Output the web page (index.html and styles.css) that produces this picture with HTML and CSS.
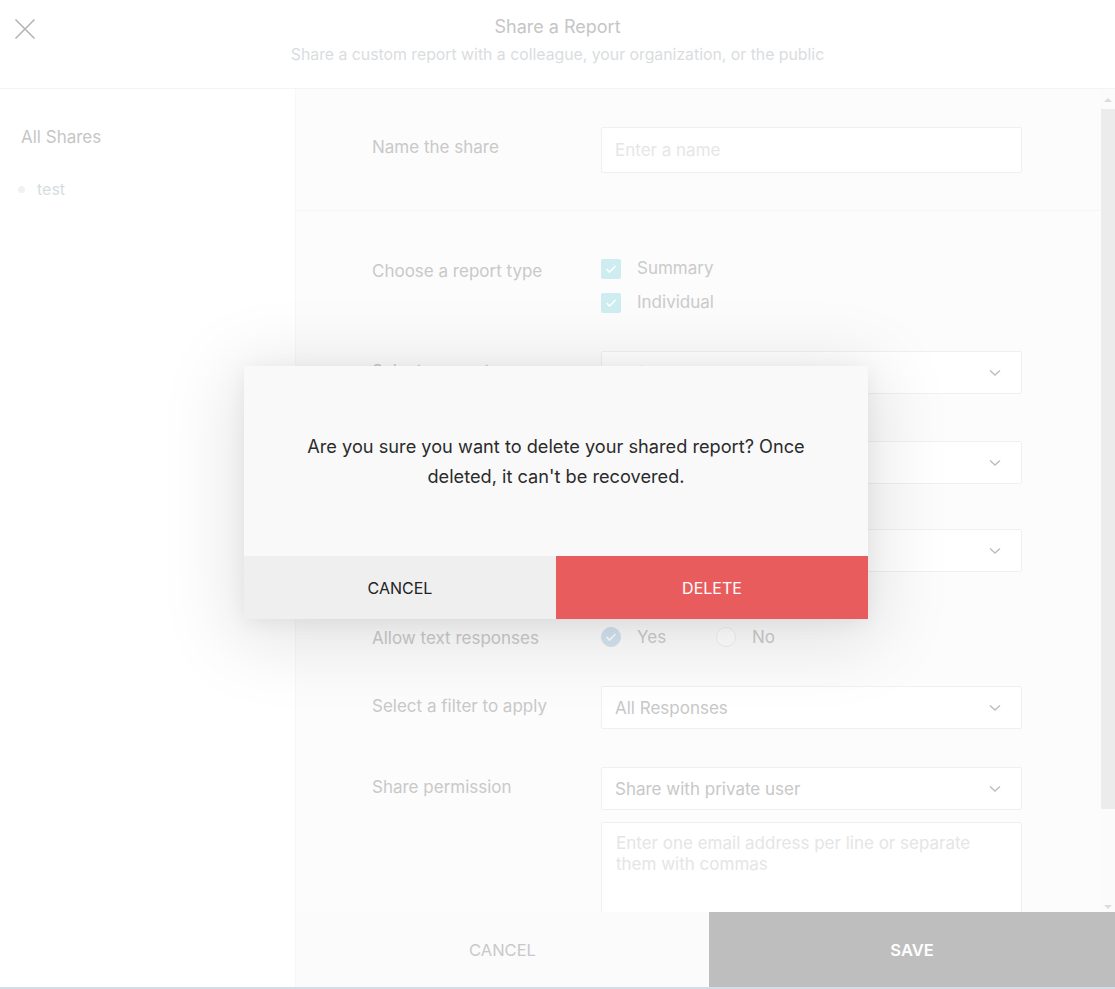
FILE: index.html
```html
<!DOCTYPE html>
<html lang="en">
<head>
<meta charset="utf-8">
<title>Share a Report</title>
<link rel="stylesheet" href="styles.css">
</head>
<body>
<div class="page">
  <header class="header">
    <button class="close" aria-label="Close">
      <svg width="22" height="22" viewBox="0 0 22 22"><path d="M1.5 1.5 L20.5 20.5 M20.5 1.5 L1.5 20.5" stroke="#b4b4b4" stroke-width="1.6" fill="none"/></svg>
    </button>
    <h1 class="title">Share a Report</h1>
    <p class="subtitle">Share a custom report with a colleague, your organization, or the public</p>
  </header>

  <div class="main">
    <aside class="sidebar">
      <div class="side-title">All Shares</div>
      <div class="side-item"><span class="dot"></span>test</div>
    </aside>

    <section class="content">
      <div class="scroll-area">
        <div class="form">
          <div class="row row-name">
            <div class="label">Name the share</div>
            <div class="input placeholder">Enter a name</div>
          </div>
          <div class="row row-type">
            <div class="label label-type">Choose a report type</div>
            <div class="checks">
              <div class="check-item"><span class="checkbox"><svg width="12" height="10" viewBox="0 0 12 10"><path d="M1.5 5 L4.5 8 L10.5 2" stroke="#fff" stroke-width="1.6" fill="none"/></svg></span>Summary</div>
              <div class="check-item"><span class="checkbox"><svg width="12" height="10" viewBox="0 0 12 10"><path d="M1.5 5 L4.5 8 L10.5 2" stroke="#fff" stroke-width="1.6" fill="none"/></svg></span>Individual</div>
            </div>
          </div>
          <div class="row row-s1">
            <div class="label">Select a report</div>
            <div class="select"><span>Default Report</span><svg class="chev" width="12" height="8" viewBox="0 0 12 8"><path d="M1 1.5 L6 6 L11 1.5" stroke="#bdbdbd" stroke-width="1.4" fill="none"/></svg></div>
          </div>
          <div class="row row-s2">
            <div class="label"></div>
            <div class="select"><span></span><svg class="chev" width="12" height="8" viewBox="0 0 12 8"><path d="M1 1.5 L6 6 L11 1.5" stroke="#bdbdbd" stroke-width="1.4" fill="none"/></svg></div>
          </div>
          <div class="row row-s3">
            <div class="label"></div>
            <div class="select"><span></span><svg class="chev" width="12" height="8" viewBox="0 0 12 8"><path d="M1 1.5 L6 6 L11 1.5" stroke="#bdbdbd" stroke-width="1.4" fill="none"/></svg></div>
          </div>
          <div class="row row-radio">
            <div class="label">Allow text responses</div>
            <div class="radios">
              <div class="radio-item"><span class="radio on"><svg width="12" height="10" viewBox="0 0 12 10"><path d="M1.5 5 L4.5 8 L10.5 2" stroke="#fff" stroke-width="1.6" fill="none"/></svg></span>Yes</div>
              <div class="radio-item"><span class="radio"></span>No</div>
            </div>
          </div>
          <div class="row row-filter">
            <div class="label">Select a filter to apply</div>
            <div class="select"><span>All Responses</span><svg class="chev" width="12" height="8" viewBox="0 0 12 8"><path d="M1 1.5 L6 6 L11 1.5" stroke="#bdbdbd" stroke-width="1.4" fill="none"/></svg></div>
          </div>
          <div class="row row-perm">
            <div class="label">Share permission</div>
            <div class="perm-controls">
              <div class="select"><span>Share with private user</span><svg class="chev" width="12" height="8" viewBox="0 0 12 8"><path d="M1 1.5 L6 6 L11 1.5" stroke="#bdbdbd" stroke-width="1.4" fill="none"/></svg></div>
              <div class="textarea">Enter one email address per line or separate them with commas</div>
            </div>
          </div>
        </div>
        <div class="scrollbar">
          <span class="arrow up"></span>
          <span class="thumb"></span>
          <span class="arrow down"></span>
        </div>
      </div>
      <footer class="footer">
        <button class="btn-cancel">CANCEL</button>
        <button class="btn-save">SAVE</button>
      </footer>
    </section>
  </div>
  <div class="bottom-line"></div>

  <div class="modal" role="dialog">
    <div class="modal-body">
      <p>Are you sure you want to delete your shared report? Once deleted, it can't be recovered.</p>
    </div>
    <div class="modal-actions">
      <button class="m-cancel">CANCEL</button>
      <button class="m-delete">DELETE</button>
    </div>
  </div>
</div>
</body>
</html>
```

FILE: styles.css
```css
* { box-sizing: border-box; }
html, body { margin: 0; padding: 0; }
body {
  font-family: "Inter", "Liberation Sans", sans-serif;
  background: #fff;
  width: 1115px;
  height: 989px;
  overflow: hidden;
}
button { font-family: inherit; border: 0; cursor: pointer; }

.page { position: relative; width: 1115px; height: 989px; display: flex; flex-direction: column; }

.header {
  position: relative;
  height: 89px;
  border-bottom: 1px solid #f4f4f4;
  text-align: center;
  padding-top: 14px;
  flex: none;
}
.close {
  position: absolute;
  left: 14px;
  top: 18px;
  background: none;
  padding: 0;
  width: 22px;
  height: 22px;
}
.close svg { display: block; }
.title {
  margin: 0;
  font-size: 18px;
  font-weight: 400;
  color: #c6c6c6;
  line-height: 26px;
}
.subtitle {
  margin: 4px 0 0;
  font-size: 15.8px;
  color: #d9dde0;
  line-height: 22px;
}

.main { display: flex; flex: 1; min-height: 0; }

.sidebar {
  width: 295px;
  flex: none;
  padding: 36px 0 0 21px;
  background: #fff;
}
.side-title { font-size: 17px; color: #c6c6c6; line-height: 24px; }
.side-item {
  display: flex;
  align-items: center;
  margin-top: 30px;
  margin-left: -3px;
  font-size: 16px;
  color: #d6dde0;
  line-height: 20px;
}
.dot {
  width: 7px; height: 7px; border-radius: 50%;
  background: #f1f1f1;
  margin-right: 12px;
}

.content {
  flex: 1;
  display: flex;
  flex-direction: column;
  background: #fcfcfc;
  border-left: 1px solid #f7f7f7;
}
.scroll-area { flex: 1; display: flex; min-height: 0; overflow: hidden; }
.form { flex: 1; padding: 38px 0 0 76px; }

.row { display: flex; }
.label {
  width: 229px;
  flex: none;
  font-size: 17px;
  color: #c9c9c9;
  line-height: 24px;
}
.row-name { padding-bottom: 37px; border-bottom: 1px solid #f6f6f6; margin-left: -76px; padding-left: 76px; }
.row-name .label { padding-top: 8px; }
.input {
  width: 421px;
  height: 46px;
  background: #fff;
  border: 1px solid #f0f0f0;
  border-radius: 2px;
  padding: 0 13px;
  display: flex;
  align-items: center;
  font-size: 17px;
}
.placeholder { color: #e6e6e6; }

.row-type { margin-top: 48px; }
.label-type { padding-top: 0; }
.checks { display: flex; flex-direction: column; gap: 15px; }
.check-item { display: flex; align-items: center; font-size: 17px; color: #cbcbcb; line-height: 19px; height: 19px; }
.checkbox {
  width: 20px; height: 20px; border-radius: 2px;
  background: #cdedf1;
  display: flex; align-items: center; justify-content: center;
  margin-right: 16px;
}

.select {
  width: 421px;
  height: 43px;
  background: #fff;
  border: 1px solid #f0f0f0;
  border-radius: 2px;
  padding: 0 20px 0 13px;
  display: flex;
  align-items: center;
  justify-content: space-between;
  font-size: 17px;
  color: #c8c8c8;
}
.chev { display: block; }
.row-s1, .row-s2, .row-s3, .row-filter, .row-perm { align-items: flex-start; }
.row-s1 .label, .row-s2 .label, .row-s3 .label, .row-filter .label, .row-perm .label { padding-top: 8px; }
.row-s1 { margin-top: 39px; }
.row-s2 { margin-top: 47px; }
.row-s3 { margin-top: 45px; }
.row-radio { margin-top: 55px; align-items: center; height: 20px; }
.row-radio .label { padding-top: 2px; }
.radios { display: flex; align-items: center; }
.radio-item { display: flex; align-items: center; font-size: 17px; color: #cbcbcb; width: 115px; }
.radio {
  width: 20px; height: 20px; border-radius: 50%;
  border: 1px solid #f0f0f0;
  background: #fff;
  margin-right: 16px;
  display: flex; align-items: center; justify-content: center;
}
.radio.on { background: #d3e3ef; border-color: #d3e3ef; }
.row-filter { margin-top: 39px; }
.row-perm { margin-top: 38px; }
.perm-controls { display: flex; flex-direction: column; gap: 12px; }
.textarea {
  width: 421px;
  height: 140px;
  background: #fff;
  border: 1px solid #f0f0f0;
  border-radius: 2px;
  padding: 10px 48px 10px 14px;
  font-size: 17px;
  line-height: 21px;
  color: #e5e5e5;
}

.scrollbar {
  width: 15px;
  flex: none;
  display: flex;
  flex-direction: column;
  align-items: center;
  background: #fbfbfb;
  padding: 9px 0 3px 1px;
}
.arrow { width: 0; height: 0; border-left: 4px solid transparent; border-right: 4px solid transparent; }
.arrow.up { border-bottom: 4px solid #dcdcdc; }
.arrow.down { border-top: 4px solid #dcdcdc; margin-top: auto; }
.thumb { width: 14px; height: 700px; background: #ececec; margin-top: 7px; }

.footer { height: 75px; flex: none; display: flex; }
.btn-cancel {
  width: 413px;
  background: #fbfbfb;
  color: #c9c9c9;
  font-size: 16.5px;
}
.btn-save {
  flex: 1;
  background: #bebebe;
  color: #fff;
  font-size: 16.5px;
  font-weight: 600;
}
.bottom-line { height: 2px; background: #d3dde8; flex: none; }

.modal {
  position: absolute;
  left: 244px;
  top: 366px;
  width: 624px;
  height: 253px;
  background: #f9f9f9;
  box-shadow: 0 12px 70px 12px rgba(0, 0, 0, 0.10), 0 4px 20px rgba(0,0,0,0.06);
  display: flex;
  flex-direction: column;
}
.modal-body {
  height: 190px;
  display: flex;
  align-items: center;
  justify-content: center;
  padding: 0 40px;
}
.modal-body p {
  margin: 0;
  text-align: center;
  font-size: 18.2px;
  line-height: 30px;
  color: #2b2b2b;
}
.modal-actions { display: flex; height: 63px; }
.m-cancel, .m-delete { flex: 1; font-size: 16px; }
.m-cancel { background: #efefef; color: #222; }
.m-delete { background: #e95c5e; color: #fff; }
```
